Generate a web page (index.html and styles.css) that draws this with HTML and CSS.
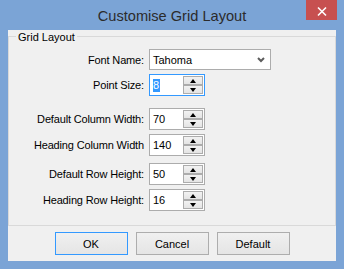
FILE: index.html
```html
<!DOCTYPE html>
<html>
<head>
<meta charset="utf-8">
<link rel="stylesheet" href="styles.css">
</head>
<body>
<div class="window">
  <div class="titlebar">
    <span class="title">Customise Grid Layout</span>
    <div class="close">
      <svg width="31" height="20" viewBox="0 0 31 20"><path d="M12 7.5 L20 15.5 M20 7.5 L12 15.5" stroke="#fff" stroke-width="1.6" fill="none"/></svg>
    </div>
  </div>
  <div class="client">
    <div class="group">
      <span class="caption">Grid Layout</span>
      <div class="row r-font">
        <span class="lbl">Font Name:</span>
        <div class="combo">
          <span class="val">Tahoma</span>
          <svg class="chev" width="8" height="6" viewBox="0 0 8 6"><path d="M1 1 L4 4 L7 1" stroke="#5c5c5c" stroke-width="2" fill="none"/></svg>
        </div>
      </div>
      <div class="row r-point">
        <span class="lbl">Point Size:</span>
        <div class="spin focused">
          <span class="val"><span class="sel">8</span></span>
          <div class="btns"><span class="sb up"></span><span class="sb down"></span></div>
        </div>
      </div>
      <div class="row r-dcw">
        <span class="lbl">Default Column Width:</span>
        <div class="spin">
          <span class="val">70</span>
          <div class="btns"><span class="sb up"></span><span class="sb down"></span></div>
        </div>
      </div>
      <div class="row r-hcw">
        <span class="lbl">Heading Column Width</span>
        <div class="spin">
          <span class="val">140</span>
          <div class="btns"><span class="sb up"></span><span class="sb down"></span></div>
        </div>
      </div>
      <div class="row r-drh">
        <span class="lbl">Default Row Height:</span>
        <div class="spin">
          <span class="val">50</span>
          <div class="btns"><span class="sb up"></span><span class="sb down"></span></div>
        </div>
      </div>
      <div class="row r-hrh">
        <span class="lbl">Heading Row Height:</span>
        <div class="spin">
          <span class="val">16</span>
          <div class="btns"><span class="sb up"></span><span class="sb down"></span></div>
        </div>
      </div>
    </div>
    <div class="buttons">
      <div class="btn default">OK</div>
      <div class="btn">Cancel</div>
      <div class="btn">Default</div>
    </div>
  </div>
</div>
</body>
</html>
```
FILE: styles.css
```css
html, body {
  margin: 0;
  padding: 0;
}
body {
  font-family: "Liberation Sans", Arial, sans-serif;
  font-size: 11px;
  color: #000;
}
.window {
  width: 344px;
  height: 269px;
  box-sizing: border-box;
  background: #7ba4d6;
  padding: 0 8px 8px 8px;
  display: flex;
  flex-direction: column;
  position: relative;
}
.titlebar {
  height: 30px;
  display: flex;
  align-items: center;
  justify-content: center;
}
.title {
  font-family: "Liberation Sans", Arial, sans-serif;
  font-size: 14.6px;
  color: #2b2b2b;
  margin-top: 1px;
}
.close {
  position: absolute;
  top: 0;
  left: 306px;
  width: 31px;
  height: 20px;
  background: #c75050;
}
.close svg {
  display: block;
}
.client {
  flex: 1;
  background: #f0f0f0;
  display: flex;
  flex-direction: column;
}
.group {
  position: relative;
  margin-top: 6px;
  height: 190px;
  box-sizing: border-box;
  border: 1px solid #d9d9d9;
  padding-top: 12px;
}
.caption {
  position: absolute;
  top: -6px;
  left: 7px;
  padding: 0 2px;
  line-height: 13px;
  background: #f0f0f0;
}
.row {
  display: flex;
  align-items: center;
}
.lbl {
  width: 135px;
  margin-right: 5px;
  text-align: right;
  white-space: nowrap;
  letter-spacing: -0.15px;
}
.r-point { margin-top: 4px; }
.r-dcw { margin-top: 12px; }
.r-hcw { margin-top: 4px; }
.r-drh { margin-top: 7px; }
.r-hrh { margin-top: 4px; }

.combo {
  width: 122px;
  height: 21px;
  box-sizing: border-box;
  border: 1px solid #acacac;
  background: #fff;
  display: flex;
  align-items: center;
  justify-content: space-between;
  padding: 0 5px 0 3px;
}
.chev {
  display: block;
}
.spin {
  width: 56px;
  height: 22px;
  box-sizing: border-box;
  border: 1px solid #acacac;
  background: #fff;
  display: flex;
}
.spin.focused {
  border-color: #3399ff;
}
.spin .val {
  flex: 1;
  padding-left: 3px;
  line-height: 20px;
  display: flex;
  align-items: center;
}
.sel {
  background: #3399ff;
  color: #fff;
  line-height: 13px;
  padding: 0 1px 0 0;
}
.btns {
  width: 20px;
  margin: 1px;
  display: flex;
  flex-direction: column;
}
.sb {
  flex: 1;
  box-sizing: border-box;
  border: 1px solid #acacac;
  background: linear-gradient(#f2f2f2, #e4e4e4);
  display: flex;
  align-items: center;
  justify-content: center;
}
.sb::before {
  content: "";
  width: 0;
  height: 0;
  border-left: 3.5px solid transparent;
  border-right: 3.5px solid transparent;
}
.sb.up::before {
  border-bottom: 4px solid #000;
}
.sb.down::before {
  border-top: 4px solid #000;
}
.buttons {
  margin-top: 6px;
  display: flex;
  justify-content: center;
  gap: 8px;
}
.btn {
  width: 73px;
  height: 23px;
  box-sizing: border-box;
  border: 1px solid #adadad;
  background: linear-gradient(#f0f0f0, #e5e5e5);
  display: flex;
  align-items: center;
  justify-content: center;
}
.btn.default {
  border-color: #3399ff;
}
```
